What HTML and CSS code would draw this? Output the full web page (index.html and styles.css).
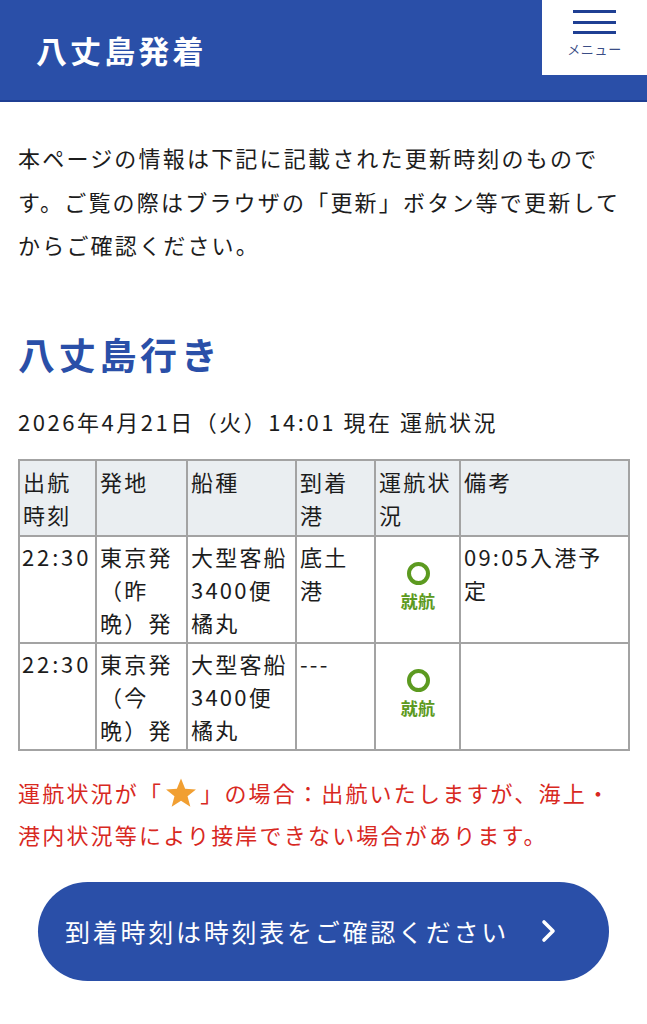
FILE: index.html
```html
<!DOCTYPE html>
<html lang="ja">
<head>
<meta charset="utf-8">
<title>八丈島発着</title>
<link rel="stylesheet" href="styles.css">
</head>
<body>
<header class="site-header">
  <h1 class="site-title">八丈島発着</h1>
  <div class="menu-btn">
    <span class="bar"></span>
    <span class="bar"></span>
    <span class="bar"></span>
    <span class="menu-label">メニュー</span>
  </div>
</header>
<main class="content">
  <p class="intro">本ページの情報は下記に記載された更新時刻のものです。ご覧の際はブラウザの「更新」ボタン等で更新してからご確認ください。</p>
  <h2 class="section-title">八丈島行き</h2>
  <p class="updated">2026年4月21日（火）14:01 現在 運航状況</p>
  <table class="status-table">
    <colgroup>
      <col class="c1"><col class="c2"><col class="c3"><col class="c4"><col class="c5"><col class="c6">
    </colgroup>
    <thead>
      <tr><th>出航時刻</th><th>発地</th><th>船種</th><th>到着港</th><th>運航状況</th><th>備考</th></tr>
    </thead>
    <tbody>
      <tr>
        <td>22:30</td>
        <td>東京発（昨晩）発</td>
        <td>大型客船3400便<br>橘丸</td>
        <td>底土港</td>
        <td class="status"><span class="ring"></span><span class="status-text">就航</span></td>
        <td class="note-cell">09:05入港予定</td>
      </tr>
      <tr>
        <td>22:30</td>
        <td>東京発（今晩）発</td>
        <td>大型客船3400便<br>橘丸</td>
        <td>---</td>
        <td class="status"><span class="ring"></span><span class="status-text">就航</span></td>
        <td class="note-cell"></td>
      </tr>
    </tbody>
  </table>
  <p class="warning">運航状況が「<svg class="star" viewBox="0 0 24 24" width="32" height="32"><path d="M12 1.2l3.1 7.6 8.1.5-6.3 5.2 2.1 7.9L12 17.9l-7 4.5 2.1-7.9L.8 9.3l8.1-.5z" fill="#f19f32"/></svg>」の場合：出航いたしますが、海上・港内状況等により接岸できない場合があります。</p>
  <a class="cta" href="#"><span class="cta-text">到着時刻は時刻表をご確認ください</span><svg class="chev" viewBox="0 0 16 24" width="16" height="24"><polyline points="3,3 12,12 3,21" fill="none" stroke="#fff" stroke-width="3.6" stroke-linecap="round" stroke-linejoin="round"/></svg></a>
</main>
</body>
</html>
```

FILE: styles.css
```css
html, body {
  margin: 0;
  padding: 0;
  background: #ffffff;
}
body {
  font-family: "Noto Sans CJK JP", "Noto Sans", sans-serif;
  color: #1c1c1c;
  width: 647px;
}
.site-header {
  height: 100px;
  background: #2a4fa8;
  border-bottom: 2px solid #1f3f93;
  display: flex;
  align-items: flex-start;
  justify-content: space-between;
}
.site-title {
  margin: 0;
  padding-left: 36px;
  line-height: 100px;
  font-size: 31px;
  font-weight: 700;
  letter-spacing: 0.1em;
  color: #ffffff;
}
.menu-btn {
  width: 105px;
  height: 75px;
  background: #ffffff;
  display: flex;
  flex-direction: column;
  align-items: center;
  padding-top: 10px;
  box-sizing: border-box;
}
.bar {
  display: block;
  width: 43px;
  height: 3px;
  background: #1f3f93;
  margin-bottom: 7.5px;
}
.menu-label {
  margin-top: -1px;
  font-size: 13px;
  letter-spacing: 0.05em;
  color: #3a4d86;
  line-height: 16px;
}
.content {
  padding: 0 18px;
}
.intro {
  margin: 34px 0 0;
  font-size: 22px;
  line-height: 43.5px;
  letter-spacing: 0.1em;
}
.section-title {
  margin: 62px 0 0;
  font-size: 37px;
  line-height: 50px;
  font-weight: 700;
  letter-spacing: 0.1em;
  color: #2a4fa8;
}
.updated {
  margin: 20px 0 0;
  font-size: 22px;
  line-height: 44px;
  letter-spacing: 0.115em;
}
.status-table {
  margin-top: 16px;
  width: 610px;
  table-layout: fixed;
  border-collapse: collapse;
  font-size: 22px;
  line-height: 33px;
  letter-spacing: 0.1em;
}
.c1 { width: 77px; }
.c2 { width: 91px; }
.c3 { width: 109px; }
.c4 { width: 79px; }
.c5 { width: 85px; }
.c6 { width: 169px; }
.status-table th,
.status-table td {
  border: 2px solid #a3a3a3;
  padding: 3px 2px 3px 3px;
  text-align: left;
  vertical-align: top;
  font-weight: 400;
}
.status-table th {
  background: #eaeef1;
  padding-top: 4px;
  padding-bottom: 4px;
}
.status-table td:first-child {
  letter-spacing: 0.13em;
  padding-left: 2px;
  padding-right: 0;
}
.status-table td.status {
  vertical-align: middle;
  text-align: center;
  padding-top: 0;
  padding-bottom: 6px;
}
.ring {
  display: block;
  margin: 0 auto;
  width: 23px;
  height: 23px;
  box-sizing: border-box;
  border: 4.5px solid #5c9a20;
  border-radius: 50%;
}
.status-text {
  display: block;
  margin-top: 6px;
  font-size: 17px;
  line-height: 20px;
  font-weight: 700;
  letter-spacing: 0.02em;
  color: #5c9a20;
}
.note-cell {
  padding-right: 8px !important;
}
.warning {
  margin: 20px 0 0;
  font-size: 22px;
  line-height: 42px;
  letter-spacing: 0.1em;
  color: #d8291f;
}
.star {
  vertical-align: -7px;
  margin: 0 3px 0 2px;
}
.cta {
  margin: 27px 20px 0;
  height: 99px;
  border-radius: 50px;
  background: #2a4fa8;
  color: #ffffff;
  text-decoration: none;
  display: flex;
  align-items: center;
  padding: 0 52px 0 27px;
  justify-content: space-between;
  box-sizing: border-box;
}
.cta-text {
  font-size: 25px;
  letter-spacing: 0.11em;
  line-height: 36px;
}
.chev {
  display: block;
}
```
